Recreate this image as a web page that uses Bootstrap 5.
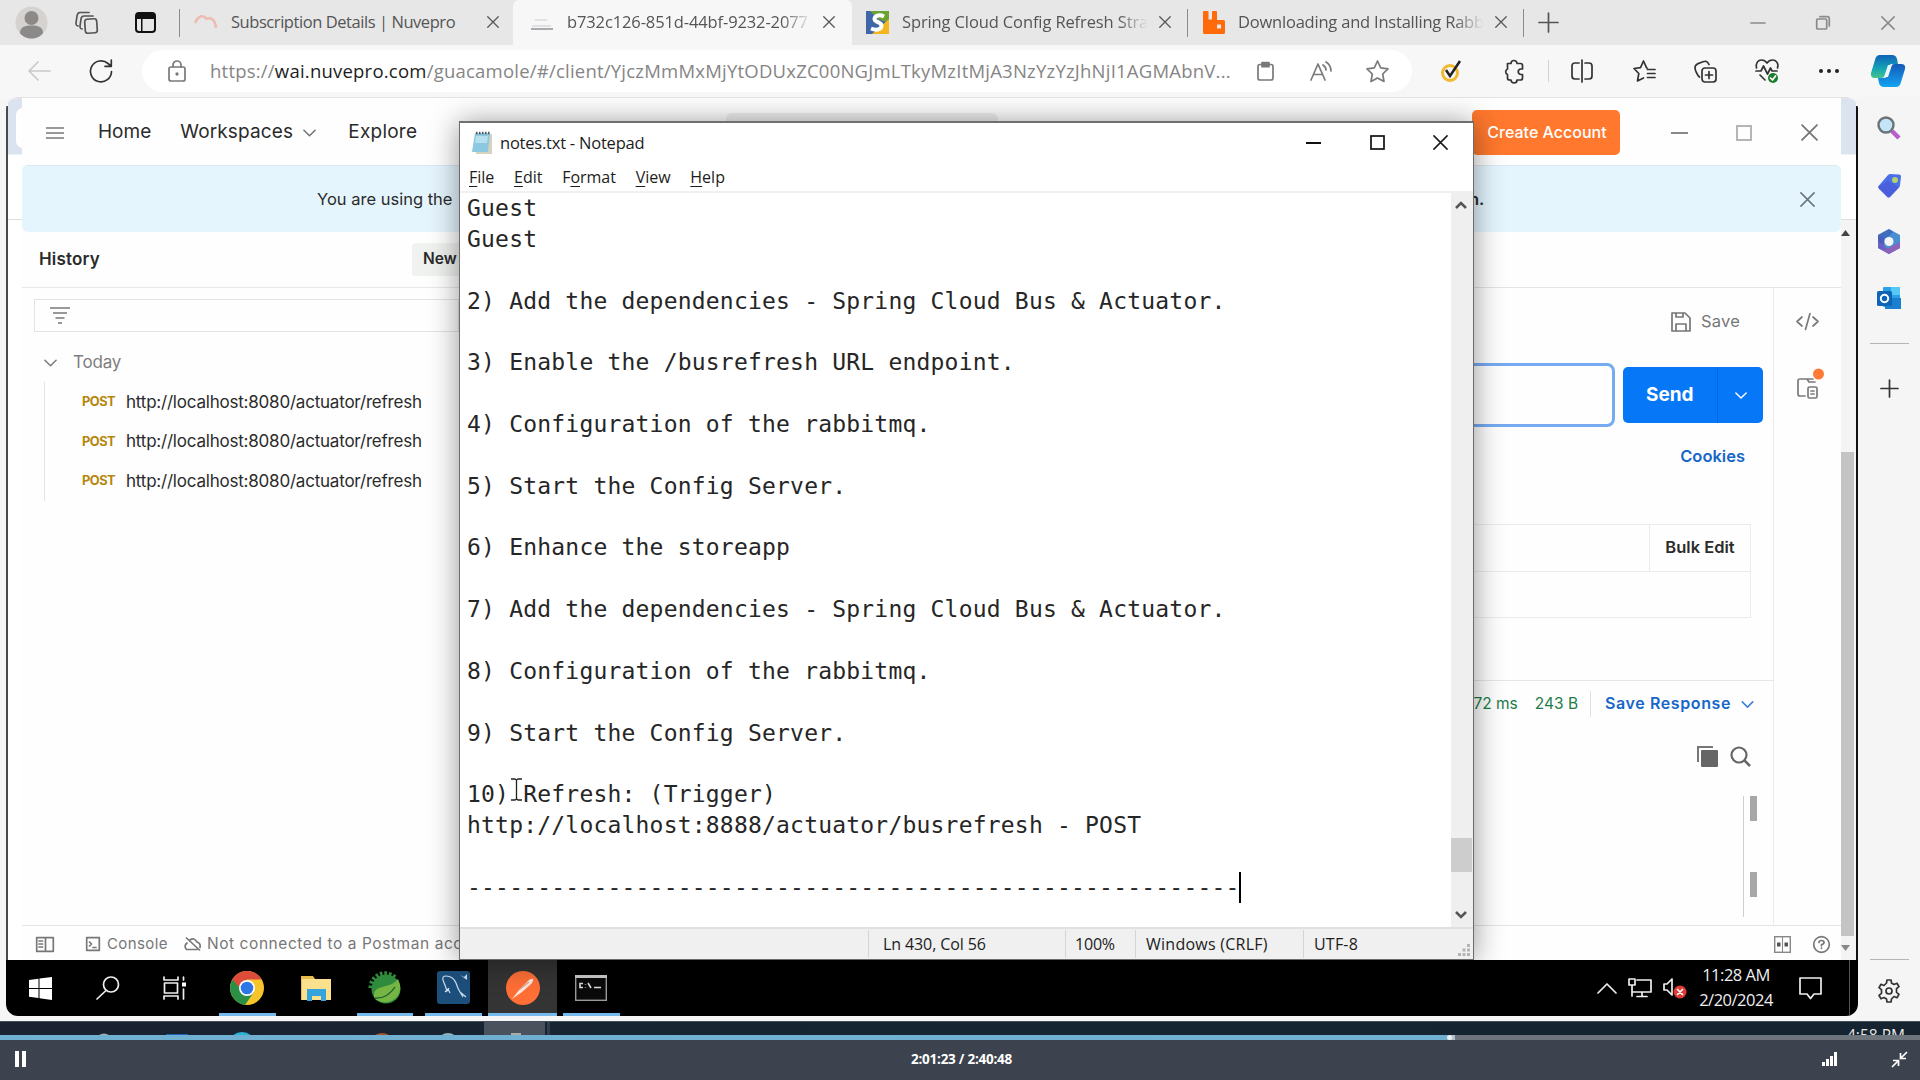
<!DOCTYPE html>
<html lang="en">
<head>
<meta charset="utf-8">
<meta name="viewport" content="width=device-width, initial-scale=1">
<title>Remote session player</title>
<link href="https://cdn.jsdelivr.net/npm/bootstrap@5.3.0/dist/css/bootstrap.min.css" rel="stylesheet">
<script src="https://cdn.jsdelivr.net/npm/bootstrap@5.3.0/dist/js/bootstrap.bundle.min.js"></script>
<style>
  html, body { height: 100%; }
  body { width: 1920px; height: 1080px; overflow: hidden; background: #f6f6f6; color: #222;
         font-family: "Open Sans", "Noto Sans", sans-serif; font-size: 16.5px; line-height: 1.2; }
  svg { display: block; flex: none; overflow: visible; }
  .ln { fill: none; stroke: currentColor; stroke-width: 1.7; stroke-linecap: round; stroke-linejoin: round; }
  .slot { display: flex; align-items: center; justify-content: center; flex: none; }
  .w24 { width: 24px; } .w40 { width: 40px; } .w48 { width: 48px; } .w50 { width: 50px; } .w56 { width: 56px; }
  .w60 { width: 60px; } .w62 { width: 62px; } .w65 { width: 65px; } .w67 { width: 67px; } .w74 { width: 74px; } .w78 { width: 78px; }
  .txt { white-space: nowrap; display: inline-block; }

  /* browser chrome */
  .tabstrip { height: 45px; background: #e7e7e7; color: #555; flex: none; }
  .vline { width: 1px; background: #8d8d8d; height: 28px; flex: none; }
  .btab { height: 45px; padding: 0 8px 1px 14px; flex: none; }
  .btab.on { background: #f7f7f7; padding: 0 11px 1px 17px; border-radius: 6px 6px 0 0; }
  .btab-1 { width: 333px; letter-spacing: -.44px; } .btab-2 { width: 339px; letter-spacing: -.12px; }
  .btab-3 { width: 335px; padding-right: 10px; letter-spacing: -.12px; } .btab-4 { width: 335px; padding-right: 10px; letter-spacing: -.21px; }
  .btab .cap { margin-left: 13px; overflow: hidden; white-space: nowrap; flex: 1; }
  .fade-r { -webkit-mask-image: linear-gradient(90deg,#000 86%,transparent 98%); mask-image: linear-gradient(90deg,#000 86%,transparent 98%); }
  .winctl { color: #8a8a8a; }
  .toolbar { height: 52px; background: #f7f7f7; padding-left: 8px; flex: none; color: #333; }
  .back { color: #c9c9c9; }
  .tb-sep { width: 1px; height: 22px; background: #d2d2d2; margin-left: 10px; }
  .addr { width: 1270px; height: 42px; border-radius: 21px; background: #fff; margin-left: 10px; padding: 0 7px 0 15px; flex: none; color: #7a7a7a; }
  .url { font-size: 18.5px; letter-spacing: .22px; margin-left: 13px; flex: 1; white-space: nowrap; color: #858585; }
  .url b { font-weight: 400; color: #1c1c1c; }

  /* remote desktop */
  .stage { height: 924px; flex: none; }
  .remote { width: 1852px; height: 919px; margin-left: 6px; padding: 0 2px; flex: none; background: #fff;
            border-top: 1px solid #e2e2e2; border-radius: 12px; overflow: hidden; position: relative; }
  .remote::after { content: ""; position: absolute; inset: 8px 0 56px 0; border-left: 2px solid #4a4a4a; border-right: 2px solid #111; pointer-events: none; }
  .desk { height: 862px; background: #fff; }
  .gutter-l { width: 14px; flex: none; } .gutter-r { width: 15px; flex: none; background: #f4f4f4; }
  .sky { height: 57px; background: #dbe3ef; overflow: hidden; }
  .sky > div { width: 7px; height: 40px; margin: 10px 0 0 8px; background: #fff; border-radius: 7px 0 0 7px; }
  .below { height: 65px; background: #fff; border-bottom: 1px solid #dedede; box-shadow: 0 -1px 0 #eef2f8; }
  .thumb { width: 13px; height: 484px; background: #c4c4c4; margin-top: 216px; }
  .arr-u { margin-top: 10px; } .arr-d { margin-top: 9px; }

  .pm { flex: 1; font-family: Inter, "Open Sans", sans-serif; color: #2b2b2b; background: #fefefe; min-width: 0; }
  .pm-head { height: 67px; font-size: 19px; padding: 2px 0 0 24px; flex: none; }
  .t-home { margin-left: 34px; } .t-ws { margin-left: 29px; letter-spacing: .15px; } .t-exp { margin-left: 32px; letter-spacing: .24px; }
  .chev-ws { margin-left: 10px; color: #777; }
  .searchbox { width: 272px; height: 40px; border-radius: 6px; background: #efefef; margin-left: 309px; }
  .btn-acct { width: 148px; height: 45px; background: #ff782d; color: #fff; border: 0; border-radius: 5px; font-size: 16px; font-weight: 500; padding: 0 0 0 2px; margin-right: 31px; }
  .close-pm { margin-right: 4px; color: #777; }
  .banner { height: 67px; background: #e5f5fe; border-top: 1px solid #d9e9f0; border-radius: 6px; font-size: 16.5px; flex: none; padding: 1px 26px 0 295px; }
  .ban-end { width: 331px; font-weight: 600; }
  .side { width: 437px; flex: none; }
  .side-head { height: 56px; border-bottom: 1px solid #e8e8e8; padding-left: 17px; }
  .side-head .ttl { font-weight: 600; font-size: 17px; letter-spacing: .19px; }
  .new-btn { width: 60px; height: 33px; background: #f0f2f0; border-radius: 4px; font-weight: 600; font-size: 15.5px; padding-left: 11px; margin-right: -13px; }
  .filter { height: 33px; border: 1px solid #e4e4e4; margin: 11px 0 1px 12px; padding-left: 15px; color: #8b8b8b; }
  .today { height: 41px; margin-top: 9px; padding: 2px 0 0 22px; font-size: 17px; letter-spacing: -.2px; color: #7e7e7e; }
  .today svg { margin-right: 16px; }
  .reqs { border-left: 1px solid #e4e4e4; margin-left: 22px; }
  .req { height: 39.5px; padding-left: 37px; }
  .verb { width: 44px; font-size: 12.8px; font-weight: 700; letter-spacing: -.5px; color: #b5860b; flex: none; }
  .req .u { font-size: 17px; letter-spacing: -.21px; }
  .pane { width: 1382px; flex: none; }
  .pane-tabs { height: 56px; border-bottom: 1px solid #e4e4e4; }
  .work { width: 1315px; border-right: 1px solid #ebebeb; }
  .rail { width: 67px; color: #7a7a7a; padding-right: 1px; }
  .ic-code { margin-top: 25px; } .ic-doc { margin: 39px 0 0 5px; }
  .actions { height: 68px; color: #767676; font-size: 16.5px; letter-spacing: .2px; padding-right: 33px; }
  .actions svg { margin-right: 10px; }
  .sendrow { margin-top: 7px; padding-right: 10px; }
  .uin { height: 64px; border: 3px solid #76abf1; border-radius: 8px; width: 300px; }
  .send { width: 140px; height: 56px; background: #0677f6; color: #fff; border-radius: 5px; margin-left: 8px; overflow: hidden; }
  .send .l { width: 95px; border-right: 1px solid #0465dc; font-weight: 700; font-size: 19px; padding-left: 23px; }
  .cook { font-size: 16.5px; font-weight: 600; color: #1767c9; height: 59px; padding-right: 28px; }
  .grid-t { border: 1px solid #ebebeb; width: 437px; margin: 38px 22px 0 0; }
  .grid-t > div { height: 46px; }
  .grid-t > div + div { border-top: 1px solid #ebebeb; }
  .bulk { width: 101px; border-left: 1px solid #ebebeb; font-weight: 600; font-size: 16.5px; }
  .resp { height: 47px; border-top: 1px solid #e6e6e6; margin-top: 62px; font-size: 15.5px; color: #1d7c48; padding-right: 17px; }
  .resp .t-ms { margin-right: 17px; }
  .resp .sep { width: 1px; height: 26px; background: #e0e0e0; margin: 0 14px 0 12px; }
  .resp svg { margin: 0 2px 0 10px; color: #3c7fd0; }
  .link-b { color: #1767c9; font-weight: 600; font-size: 16px; letter-spacing: .6px; }
  .rtools { height: 59px; padding-right: 22px; gap: 12px; }
  .mini { width: 30px; height: 121px; border-left: 1px solid #cfcfcf; }
  .mini i { display: block; width: 7px; height: 25px; background: #a7a7a7; margin-left: 6px; }
  .mini i + i { margin-top: 51px; }
  .pm-foot { height: 35px; border-top: 1px solid #e4e4e4; flex: none; color: #777; font-size: 15px; padding: 2px 11px 0 14px; }
  .ic-con { margin-left: 32px; } .ic-cloud { margin-left: 16px; } .ic-help { margin-left: 22px; }
  .t-con { margin-left: 7px; letter-spacing: .4px; } .t-not { margin-left: 6px; font-size: 15.5px; letter-spacing: .57px; }

  /* notepad */
  .np { position: absolute; left: 453px; top: 23px; width: 1015px; height: 839px; background: #fff; border: 1px solid #6c6c6c; border-top: 2px solid #6f6f6f;
        box-shadow: 0 2px 28px rgba(0,0,0,.42); color: #1c1c1c; }
  .np-title { height: 41px; padding: 0 0 2px 11px; }
  .np-title .txt { margin-left: 7px; letter-spacing: -.22px; }
  .np-menu { height: 29px; padding: 1px 0 0 9px; gap: 19.7px; font-size: 16px; border-bottom: 2px solid #f0f0f0; }
  .np-menu u { text-underline-offset: 3px; }
  .np-body { height: 734px; }
  .np-text { margin: 0; padding: 0 0 0 7px; font: 23px/30.86px "DejaVu Sans Mono", "Liberation Mono", monospace; letter-spacing: .2px; color: #262626; overflow: hidden; flex: 1; }
  .caret { display: inline-block; width: 2px; height: 31px; background: #000; vertical-align: -8px; margin-left: -1px; }
  .np-scroll { width: 22px; background: #efefef; padding-right: 2px; }
  .np-scroll path { fill: none; stroke: #555; stroke-width: 2.5; }
  .np-scroll .up { margin-top: 8px; transform: scaleY(-1); } .np-scroll .down { margin: 39px 0 8px; }
  .np-thumb { width: 21px; height: 34px; background: #cdcdcd; }
  .np-status { height: 32px; background: #f0f0f0; border-top: 2px solid #e0e0e0; font-size: 16px; }
  .np-status > div { border-left: 1px solid #d5d5d5; height: 28px; padding: 5px 0 0 10px; }
  .np-status .s1 { width: 197px; margin-left: 408px; padding-left: 14px; letter-spacing: -.1px; } .np-status .s2 { width: 70px; letter-spacing: -.2px; padding-left: 9px; }
  .np-status .s3 { width: 168px; letter-spacing: .25px; } .np-status .s4 { letter-spacing: .2px; }
  .np-status svg { margin: 0 3px 3px 0; }
  .ibeam { position: absolute; left: 505px; top: 680px; }

  /* remote taskbar */
  .rtask { height: 56px; background: #000; color: #eee; margin: 0 -2px; padding: 0 2px 0 1px; }
  .app { width: 68.8px; height: 56px; display: flex; align-items: center; justify-content: center; border-bottom: 1px solid transparent; flex: none; position: relative; }
  .app.first { margin-left: 5px; }
  .app.run::after { content: ""; position: absolute; left: 6px; right: 6px; bottom: -1px; height: 3px; background: #76b9ed; }
  .app.on { background: #343434; } .app.on::after { left: 0; right: 0; }
  .systray { gap: 11px; }
  .clock { font-size: 16.5px; letter-spacing: -.5px; line-height: 25px; width: 98px; text-align: center; padding-bottom: 2px; margin-left: -11px; }
  .ic-act { margin-right: 16px; margin-left: 3px; }
  .peek { width: 1px; height: 56px; background: #555; margin-right: 6px; }

  .rsb { width: 62px; flex: none; color: #333; background: #f5f5f5; padding-top: 19px; }
  .hr2 { width: 39px; height: 1px; background: #b5b5b5; }
  .i2 { margin-top: 33px; } .i3 { margin-top: 31px; } .i4 { margin-top: 32px; } .i5 { margin-top: 33px; } .i6 { margin-top: 36px; } .i7 { margin-top: 562px; } .i8 { margin-top: 19px; }

  /* player */
  .strip { height: 14px; background: linear-gradient(90deg,#1b2231,#152532 50%,#162431); flex: none; overflow: hidden; color: #e6e6e6; border-top: 1px solid #45525d; position: relative; }
  .tray { position: absolute; left: 1847px; top: 4px; font-size: 15.5px; }
  .prog { height: 5px; background: #6d747c; flex: none; }
  .prog .p1 { width: 1449px; background: #6eafd2; } .prog .p2 { width: 6px; background: #b3c1ca; }
  .knob { position: absolute; left: 1447px; top: 1035px; width: 5px; height: 5px; border-radius: 50%; background: #e9eef1; }
  .player { height: 40px; background: #3c424e; color: #fff; padding: 0 13px 2px 15px; }
  .ptime { font-size: 13.5px; font-weight: 700; letter-spacing: -.25px; padding-left: 75px; }
  .player .acts { gap: 54px; }
</style>
</head>
<body class="d-flex flex-column">
<svg width="0" height="0" class="position-absolute">
  <symbol id="x" viewBox="0 0 16 16"><path class="ln" d="M1 1l14 14M15 1L1 15"/></symbol>
  <symbol id="dn" viewBox="0 0 14 8"><path class="ln" d="M1 1l6 6 6-6"/></symbol>
</svg>

<div class="tabstrip d-flex align-items-center">
  <div class="slot w62"><svg width="33" height="33" viewBox="0 0 33 33"><circle cx="16.500" cy="16.500" r="16" fill="#d5d2cf"/><circle cx="16.500" cy="12" r="7" fill="#8b8a89"/><path d="M5 27c0-6 5-7.500 11.500-7.500S28 21 28 27c-3 4-7 5.500-11.500 5.500S8 31 5 27z" fill="#8b8a89"/></svg></div>
  <div class="slot w50"><svg width="24" height="24" viewBox="0 0 24 24" class="ln"><rect x="10" y="8" width="12" height="14" rx="2.500" transform="rotate(-4 16 15)"/><path d="M7 18c-2-.5-2-1-2-3l1-7c.3-2 1-3 3-3l9 0"/><path d="M3 15c-2-.5-2-1-2-3L2 5c.3-2 1-3.500 3-3.500L14 1.500"/></svg></div>
  <div class="slot w67"><svg width="21" height="21" viewBox="0 0 21 21"><rect x="1" y="1" width="19" height="19" rx="3" fill="none" stroke="#111" stroke-width="2"/><path d="M1 2h19v5H1zM6 6h1.500v14H6z" fill="#111"/></svg></div>
  <div class="vline"></div>
  <div class="btab btab-1 d-flex align-items-center">
    <svg width="24" height="24" viewBox="0 0 24 24" fill="none" stroke="#eebbb0" stroke-width="2.500"><path d="M1 13C4 6 9 4 13 9M11 9c6-2 10 0 11 9"/></svg>
    <div class="cap"><span class="txt">Subscription Details | Nuvepro</span></div>
    <div class="slot w24"><svg width="12" height="12"><use href="#x"/></svg></div>
  </div>
  <div class="btab on btab-2 d-flex align-items-center">
    <svg width="24" height="24" viewBox="0 0 24 24"><path d="M1 19h22" stroke="#aaa" stroke-width="2"/><path d="M2 16h19M5 10h12" stroke="#e0e0e6" stroke-width="2"/></svg>
    <div class="cap fade-r"><span class="txt">b732c126-851d-44bf-9232-2077</span></div>
    <div class="slot w24"><svg width="12" height="12"><use href="#x"/></svg></div>
  </div>
  <div class="btab btab-3 d-flex align-items-center">
    <svg width="23" height="23" viewBox="0 0 23 23"><rect width="23" height="23" fill="#3f67a8"/><path d="M4 0h19v12L12 8z" fill="#6ea234"/><path d="M23 8v15H6z" fill="#f3b61f"/><path d="M18 5.500C14 3.500 9 4 8.500 8c0 3.500 7.500 3 7 7s-6 4.500-10.500 2.500" fill="none" stroke="#fff" stroke-width="4"/></svg>
    <div class="cap fade-r"><span class="txt">Spring Cloud Config Refresh Strat</span></div>
    <div class="slot w24"><svg width="12" height="12"><use href="#x"/></svg></div>
  </div>
  <div class="vline"></div>
  <div class="btab btab-4 d-flex align-items-center">
    <svg width="23" height="23" viewBox="0 0 23 23"><path d="M2 0h3.500q1 0 1 1v7.500H10V1q0-1 1-1h3q1 0 1 1v8h6.500q1.500 0 1.500 1.500v11q0 1.500-1.500 1.500h-19Q1 23 1 21.500V1q0-1 1-1zM15 13.500v4h4v-4z" fill="#ff6a0a"/></svg>
    <div class="cap fade-r"><span class="txt">Downloading and Installing Rabbi</span></div>
    <div class="slot w24"><svg width="12" height="12"><use href="#x"/></svg></div>
  </div>
  <div class="vline"></div>
  <div class="slot w48"><svg width="19" height="19" viewBox="0 0 19 19" class="ln"><path d="M9.500 0v19M0 9.500h19"/></svg></div>
  <div class="d-flex ms-auto winctl">
    <div class="slot w65"><svg width="14" height="2" viewBox="0 0 14 2" class="ln"><path d="M0 1h14"/></svg></div>
    <div class="slot w65"><svg width="14" height="14" viewBox="0 0 14 14" class="ln"><rect x=".7" y="3" width="10" height="10" rx="1"/><path d="M4 .7h7.500Q13.300.7 13.300 3v7"/></svg></div>
    <div class="slot w65"><svg width="14" height="14"><use href="#x"/></svg></div>
  </div>
</div>

<div class="toolbar d-flex align-items-center">
  <div class="slot w62 back"><svg width="22" height="20" viewBox="0 0 22 20" class="ln"><path d="M22 10H1M10 1L1 10l9 9"/></svg></div>
  <div class="slot w62"><svg width="24" height="24" viewBox="0 0 24 24" class="ln"><path d="M22.500 12.500A10.500 10.500 0 1 1 19 4.500L22 7M22.300 1v6.300h-6.300"/></svg></div>
  <div class="addr d-flex align-items-center">
    <div class="slot w40"><svg width="18" height="22" viewBox="0 0 18 22" class="ln"><rect x="1" y="7" width="16" height="14" rx="2"/><path d="M5 7V5a4 4 0 0 1 8 0v2"/><circle cx="9" cy="14" r=".8"/></svg></div>
    <div class="url"><span class="txt">https://<b>wai.nuvepro.com</b>/guacamole/#/client/YjczMmMxMjYtODUxZC00NGJmLTkyMzItMjA3NzYzYzJhNjI1AGMAbnV...</span></div>
    <div class="slot w56"><svg width="17" height="19" viewBox="0 0 17 19" class="ln"><rect x="1" y="2.500" width="15" height="15.500" rx="2"/><rect x="5" y=".7" width="7" height="4" fill="#777"/></svg></div>
    <div class="slot w56"><svg width="22" height="20" viewBox="0 0 22 20" class="ln"><path d="M1 19L8 3l7 16M3.500 13.500h9M13 4q3 2 3 5M16 1q5 3 5 9"/></svg></div>
    <div class="slot w56"><svg width="23" height="23" viewBox="0 0 23 23" class="ln"><path d="M11.500 1l3.200 6.800 7.300 1-5.300 5.200 1.300 7.500-6.500-3.600L5 21.500 6.300 14 1 8.800l7.300-1z"/></svg></div>
  </div>
  <div class="slot w78"><svg width="20" height="22" viewBox="0 0 20 22" fill="none"><circle cx="9" cy="13" r="7.500" stroke="#f0b92e" stroke-width="3"/><path d="M5 10l4 6L19 1" stroke="#222" stroke-width="2.500"/></svg></div>
  <div class="slot w48"><svg width="22" height="23" viewBox="0 0 22 23" class="ln"><path d="M4.500 3.500H8a3 3 0 0 1 6 0h3.500q2 0 2 2V9h-1.500a2.600 2.600 0 0 0 0 5.500h1.500V18q0 2-2 2H14a3 3 0 0 1-6 0H6.500q-2 0-2-2v-3.500a3 3 0 0 1 0-5.500z"/></svg></div>
  <div class="tb-sep"></div>
  <div class="slot w65"><svg width="22" height="22" viewBox="0 0 22 22" class="ln"><path d="M8 3H4Q1 3 1 6v10q0 3 3 3h4M14 3h4q3 0 3 3v10q0 3-3 3h-4M11 0v22"/></svg></div>
  <div class="slot w60"><svg width="23" height="22" viewBox="0 0 23 22" class="ln"><path d="M14 8l-.5-.3L10.500 1l-3 6.700L1 8.500l4.800 5L4.500 21l6-3M14.500 9.500H22M14.500 13.500H22M14.500 17.500H22"/></svg></div>
  <div class="slot w62"><svg width="23" height="23" viewBox="0 0 23 23" class="ln"><rect x="8" y="8" width="14" height="14" rx="3"/><path d="M15 11.500v7M11.500 15h7M5.500 17C3 15 1 10 1 7.500 1 4 4 3.500 7 2.500s6-3 8 2"/></svg></div>
  <div class="slot w62"><svg width="24" height="24" viewBox="0 0 24 24" class="ln"><path d="M1.500 9C.5 4 3 1 6.500 1 10 1 12 4 12 4s2-3 5.500-3C21 1 24 4 22.500 9M1 12h5l2.500-5 4 8 3-6 1.500 3H22M5 16l5 5"/><circle cx="18" cy="19" r="5" fill="#1d7f2e" stroke="none"/><path d="M15.500 19l2 2 3-4" stroke="#fff"/></svg></div>
  <div class="slot w62"><svg width="20" height="4" viewBox="0 0 20 4" fill="#222"><circle cx="2" cy="2" r="2"/><circle cx="10" cy="2" r="2"/><circle cx="18" cy="2" r="2"/></svg></div>
  <div class="slot w56"><svg width="34" height="32" viewBox="0 0 34 32"><defs><linearGradient id="ga" x1="0" y1="0" x2="0" y2="1"><stop offset="0" stop-color="#0f63b8"/><stop offset=".6" stop-color="#16a5b5"/><stop offset="1" stop-color="#45c58b"/></linearGradient><linearGradient id="gb" x1="0" y1="0" x2="0" y2="1"><stop offset="0" stop-color="#1659b5"/><stop offset="1" stop-color="#12a4f4"/></linearGradient></defs><path d="M9 0h12q4 0 5 4l1 5h-6q-3 0-4 4l-2 6q-1 4-5 4H4q-5 0-4-5L4 5q1-5 5-5z" fill="url(#ga)"/><path d="M25 32H13q-4 0-5-4l-1-5h6q3 0 4-4l2-6q1-4 5-4h6q5 0 4 5l-4 13q-1 5-5 5z" fill="url(#gb)"/><path d="M17 10h4l-4 12h-4z" fill="#eaf7ff"/></svg></div>
</div>

<div class="stage d-flex">
  <div class="remote">
    <div class="desk d-flex">
      <div class="gutter-l"><div class="sky"><div></div></div><div class="below"></div></div>
      <div class="pm d-flex flex-column">
        <div class="pm-head d-flex align-items-center">
          <svg width="18" height="12" viewBox="0 0 18 12" stroke="#999" stroke-width="1.800"><path d="M0 1h18M0 6h18M0 11h18"/></svg>
          <span class="txt t-home">Home</span>
          <span class="txt t-ws">Workspaces</span>
          <svg width="13" height="8" class="chev-ws"><use href="#dn"/></svg>
          <span class="txt t-exp">Explore</span>
          <div class="searchbox"></div>
          <button class="btn-acct ms-auto"><span class="txt">Create Account</span></button>
          <div class="slot w56"><svg width="17" height="2" viewBox="0 0 17 2"><path d="M0 1h17" stroke="#888" stroke-width="2"/></svg></div>
          <div class="slot w74"><svg width="16" height="16" viewBox="0 0 16 16"><rect x="1" y="1" width="14" height="14" fill="none" stroke="#b5b5b5" stroke-width="2"/></svg></div>
          <div class="slot w56 close-pm"><svg width="17" height="17"><use href="#x"/></svg></div>
        </div>
        <div class="banner d-flex align-items-center">
          <span class="txt">You are using the</span>
          <span class="ban-end ms-auto">n.</span>
          <svg width="15" height="15" class="text-secondary"><use href="#x"/></svg>
        </div>
        <div class="d-flex flex-grow-1">
          <div class="side">
            <div class="side-head d-flex align-items-center justify-content-between"><span class="txt ttl">History</span><div class="new-btn d-flex align-items-center"><span class="txt">New</span></div></div>
            <div class="filter d-flex align-items-center"><svg width="20" height="17" viewBox="0 0 20 17"><path d="M0 1h20M3 6h14M5.500 11h9M8 16h4" stroke="#999" stroke-width="1.800"/></svg></div>
            <div class="today d-flex align-items-center"><svg width="13" height="8"><use href="#dn"/></svg><span class="txt">Today</span></div>
            <div class="reqs">
              <div class="req d-flex align-items-center"><span class="verb">POST</span><span class="txt u">http://localhost:8080/actuator/refresh</span></div>
              <div class="req d-flex align-items-center"><span class="verb">POST</span><span class="txt u">http://localhost:8080/actuator/refresh</span></div>
              <div class="req d-flex align-items-center"><span class="verb">POST</span><span class="txt u">http://localhost:8080/actuator/refresh</span></div>
            </div>
          </div>
          <div class="pane d-flex flex-column">
            <div class="pane-tabs"></div>
            <div class="d-flex flex-grow-1">
              <div class="work d-flex flex-column align-items-end">
                <div class="actions d-flex align-items-center"><svg width="20" height="20" viewBox="0 0 20 20" class="ln"><path d="M1 1h13l5 5v13H1zM5 1v4h7V1M5 19v-7h10v7"/></svg><span class="txt">Save</span></div>
                <div class="sendrow d-flex align-items-center">
                  <div class="uin"></div>
                  <div class="send d-flex"><div class="l d-flex align-items-center"><span class="txt">Send</span></div><div class="slot flex-grow-1"><svg width="12" height="7"><use href="#dn"/></svg></div></div>
                </div>
                <div class="cook d-flex align-items-center"><span class="txt">Cookies</span></div>
                <div class="grid-t">
                  <div class="d-flex justify-content-end"><div class="bulk slot"><span class="txt">Bulk Edit</span></div></div>
                  <div></div>
                </div>
                <div class="resp w-100 d-flex align-items-center justify-content-end">
                  <span class="txt t-ms">72 ms</span><span class="txt">243 B</span>
                  <div class="sep"></div>
                  <span class="txt link-b">Save Response</span><svg width="13" height="7"><use href="#dn"/></svg>
                </div>
                <div class="rtools d-flex align-items-center">
                  <svg width="21" height="21" viewBox="0 0 21 21"><path d="M1 16V1h15" fill="none" stroke="#777" stroke-width="2"/><rect x="4" y="4" width="17" height="17" rx="1" fill="#666"/></svg>
                  <svg width="21" height="21" viewBox="0 0 21 21"><circle cx="9" cy="9" r="7.500" fill="none" stroke="#666" stroke-width="2.200"/><path d="M14 14l6 6" stroke="#666" stroke-width="2.500"/></svg>
                </div>
                <div class="mini mt-auto mb-2"><i></i><i></i></div>
              </div>
              <div class="rail d-flex flex-column align-items-center">
                <svg width="23" height="17" viewBox="0 0 23 17" class="ln ic-code"><path d="M6 4L1 8.500 6 13M17 4l5 4.500-5 4.500M14 .5L9.500 16.500"/></svg>
                <svg width="26" height="30" viewBox="0 0 26 30" class="ln ic-doc"><path d="M8 27H3q-2 0-2-2V12q0-2 2-2h13M10 10l2 3h6"/><rect x="11" y="18" width="9" height="11" rx="1.500"/><path d="M14 22h3M14 25h3"/><circle cx="21.500" cy="5" r="5.500" fill="#ff7a36" stroke="none"/></svg>
              </div>
            </div>
          </div>
        </div>
        <div class="pm-foot d-flex align-items-center">
          <svg width="18" height="15" viewBox="0 0 18 15" class="ln"><rect x=".7" y=".7" width="16.600" height="13.600"/><path d="M9.500 1v13M3 4h3.500M3 7h3.500M3 10h3.500"/></svg>
          <svg width="14" height="14" viewBox="0 0 14 14" class="ln ic-con"><rect x=".7" y=".7" width="12.600" height="12.600"/><path d="M3.500 5l2 2-2 2M7 10.500h3"/></svg>
          <span class="txt t-con">Console</span>
          <svg width="17" height="14" viewBox="0 0 17 14" class="ln ic-cloud"><path d="M3 6Q-.5 9 2.500 12.500H13M6 3q4-3 7 2 4 1.500 3 5.500M2.500 1l13 12"/></svg>
          <span class="txt t-not">Not connected to a Postman acc</span>
          <svg class="ms-auto" width="17" height="17" viewBox="0 0 17 17"><rect x=".7" y=".7" width="15.600" height="15.600" fill="none" stroke="#888" stroke-width="1.400"/><path d="M8.500 1v15" stroke="#888"/><path d="M3 6.500h3.500v4H3zM10.500 6.500H14v4h-3.500z" fill="#555"/></svg>
          <svg width="17" height="17" viewBox="0 0 17 17" class="ln ic-help"><circle cx="8.500" cy="8.500" r="7.800"/><path d="M6 6.500Q6 4.500 8.500 4.500T11 6.500Q11 8 8.500 8.500v1.300M8.500 12v.3"/></svg>
        </div>
      </div>
      <div class="gutter-r d-flex flex-column">
        <div class="sky"></div><div class="below"></div>
        <svg width="9" height="6" viewBox="0 0 9 6" class="arr-u"><path d="M0 6l4.500-6L9 6z" fill="#444"/></svg>
        <div class="thumb"></div>
        <svg width="9" height="6" viewBox="0 0 9 6" class="arr-d"><path d="M0 0l4.500 6L9 0z" fill="#888"/></svg>
      </div>
    </div>

    <div class="rtask d-flex align-items-center">
      <div class="slot w67"><svg width="23" height="23" viewBox="0 0 23 23" fill="#fff"><path d="M0 3l9.500-1.300V11H0zM10.500 1.500L23 0v11H10.500zM0 12h9.500v9L0 19.700zM10.500 12H23v11l-12.500-1.700z"/></svg></div>
      <div class="slot w67"><svg width="24" height="24" viewBox="0 0 24 24" class="ln"><circle cx="15" cy="8.500" r="7.500"/><path d="M10 14.500L1 23"/></svg></div>
      <div class="slot w67"><svg width="24" height="22" viewBox="0 0 24 22" class="ln"><path d="M1 0v3h14V0M1 22v-3h14v3M1.500 6h13v10h-13zM20.500 0v3M20.500 12v10"/><path d="M19 5.500h4v4h-4z" fill="#fff" stroke="none"/></svg></div>
      <div class="app run first"><svg width="34" height="34" viewBox="0 0 34 34"><circle cx="17" cy="17" r="17" fill="#f6c52c"/><path d="M17 17L2.300 8.500A17 17 0 0 0 15 33.900L24 21z" fill="#2b8f45"/><path d="M2.300 8.500A17 17 0 0 1 31.700 8.500H17L10 17z" fill="#dd4b3b"/><circle cx="17" cy="17" r="8" fill="#fff"/><circle cx="17" cy="17" r="6.300" fill="#2c76e6"/></svg></div>
      <div class="app"><svg width="30" height="26" viewBox="0 0 30 26"><path d="M0 1h12l2 3h16v21H0z" fill="#e9bd4c"/><path d="M1 4h29v21H1z" fill="#fbe08d"/><path d="M6 26V14h19v12h-5v-5h-9v5z" fill="#35a4da"/></svg></div>
      <div class="app run"><svg width="34" height="34" viewBox="0 0 34 34"><path d="M3 17a14 14 0 0 1 24-10" fill="none" stroke="#2f8b3c" stroke-width="5" stroke-dasharray="2.500 1.800"/><circle cx="18" cy="18" r="14.500" fill="#2f8b3c"/><path d="M6 26C5 12 22 19 30 8q5 10-1 18-9 9-21 3z" fill="#74b544"/><path d="M7 27q12 1 20-11" fill="none" stroke="#1d5c2a" stroke-width="1.300"/></svg></div>
      <div class="app run"><svg width="33" height="33" viewBox="0 0 33 33"><rect width="33" height="33" rx="3" fill="#1d4f7c"/><path d="M9 20q1 1 3-3M10 20Q8 14 6 9q-1-4 3-4 7 0 10 7 2 6 4 9l6 5M23 21l3 5M8 21l3-3 2 4" fill="none" stroke="#c8dff0" stroke-width="1.200"/><path d="M23 4l4 2 3-3v6z" fill="#c8dff0"/></svg></div>
      <div class="app run on"><svg width="34" height="34" viewBox="0 0 34 34"><circle cx="17" cy="17" r="17" fill="#ff6f36"/><path d="M6 28l7-9 8-8q4-4 6-3 1 2-3 6l-8 7z" fill="#ffe9df"/><path d="M13 19l10-8" stroke="#e6a48a" stroke-width="1.500"/></svg></div>
      <div class="app run"><svg width="32" height="26" viewBox="0 0 32 26"><rect x=".7" y=".7" width="30.600" height="24.600" fill="#0a0a0a" stroke="#9a9a9a" stroke-width="1.400"/><path d="M0 1.500h32" stroke="#ccc" stroke-width="3"/><path d="M8 8.500H5v4h3M10.500 9v.5M10.500 12v.5M13 8l3 5M19 12.500h7" stroke="#ddd" stroke-width="1.600" fill="none"/></svg></div>
      <div class="ms-auto d-flex align-items-center systray">
        <svg width="20" height="11" viewBox="0 0 20 11" class="ln"><path d="M1 10l9-9 9 9"/></svg>
        <svg width="24" height="20" viewBox="0 0 24 20" class="ln"><path d="M9 2h14v12H5M14 14v4M9 18.500h10M1 1h6v6H1zM4 7v11"/></svg>
        <svg width="24" height="22" viewBox="0 0 24 22" class="ln"><path d="M9 2v16l-5-5H1V7h3z"/><circle cx="17" cy="15" r="6.500" fill="#df3a35" stroke="none"/><path d="M14.500 12.500l5 5M19.500 12.500l-5 5" stroke="#fff"/></svg>
        <div class="clock"><span class="txt">11:28 AM</span><br><span class="txt">2/20/2024</span></div>
        <svg width="23" height="23" viewBox="0 0 23 23" class="ln ic-act"><path d="M1 1h21v16h-7l-3.500 4.500L8 17H1z"/></svg>
        <div class="peek"></div>
      </div>
    </div>

    <div class="np d-flex flex-column">
      <div class="np-title d-flex align-items-center">
        <svg width="22" height="24" viewBox="0 0 22 24"><path d="M6 3h15v20H5z" fill="#d7d2bd"/><path d="M4 2h15l-2 19H1z" fill="#8cc8df"/><path d="M5 5h12l-1 7H4z" fill="#b6e0ee"/><path d="M5 2h14" stroke="#555" stroke-width="2.500" stroke-dasharray="1.500 1.500"/></svg>
        <span class="txt">notes.txt - Notepad</span>
        <div class="d-flex ms-auto">
          <div class="slot w65"><svg width="15" height="2"><path d="M0 1h15" stroke="#111" stroke-width="2"/></svg></div>
          <div class="slot w62"><svg width="15" height="15"><rect x="1" y="1" width="13" height="13" fill="none" stroke="#111" stroke-width="1.700"/></svg></div>
          <div class="slot w65"><svg width="15" height="15"><use href="#x"/></svg></div>
        </div>
      </div>
      <div class="np-menu d-flex align-items-center">
        <span class="txt"><u>F</u>ile</span><span class="txt"><u>E</u>dit</span><span class="txt">F<u>o</u>rmat</span><span class="txt"><u>V</u>iew</span><span class="txt"><u>H</u>elp</span>
      </div>
      <div class="np-body d-flex">
<pre class="np-text">Guest
Guest

2) Add the dependencies - Spring Cloud Bus &amp; Actuator.

3) Enable the /busrefresh URL endpoint.

4) Configuration of the rabbitmq.

5) Start the Config Server.

6) Enhance the storeapp

7) Add the dependencies - Spring Cloud Bus &amp; Actuator.

8) Configuration of the rabbitmq.

9) Start the Config Server.

10) Refresh: (Trigger)
http://localhost:8888/actuator/busrefresh - POST

-------------------------------------------------------<span class="caret"></span></pre>
        <div class="np-scroll d-flex flex-column align-items-center">
          <svg width="12" height="8" class="up"><path d="M1 1l5 5 5-5"/></svg>
          <div class="np-thumb mt-auto"></div>
          <svg width="12" height="8" class="down"><path d="M1 1l5 5 5-5"/></svg>
        </div>
      </div>
      <div class="np-status d-flex align-items-center">
        <div class="s1"><span class="txt">Ln 430, Col 56</span></div>
        <div class="s2"><span class="txt">100%</span></div>
        <div class="s3"><span class="txt">Windows (CRLF)</span></div>
        <div class="s4"><span class="txt">UTF-8</span></div>
        <svg class="ms-auto align-self-end" width="12" height="12" viewBox="0 0 12 12" fill="#b5b5b5"><path d="M9 0h3v3H9zM9 4.500h3v3H9zM9 9h3v3H9zM4.500 4.500h3v3h-3zM4.500 9h3v3h-3zM0 9h3v3H0z"/></svg>
      </div>
    </div>
    <svg class="ibeam" width="11" height="23" viewBox="0 0 11 23"><path d="M0 1h4l1.500 1L7 1h4M0 22h4l1.500-1L7 22h4M5.500 2v19" fill="none" stroke="#222" stroke-width="1.300"/></svg>
  </div>

  <div class="rsb d-flex flex-column align-items-center">
    <svg width="24" height="24" viewBox="0 0 24 24"><path d="M15 15l7 7" stroke="#b45fcb" stroke-width="4.500"/><circle cx="9" cy="9" r="7.500" fill="#c4e5f8" stroke="#6b7278" stroke-width="2.400"/></svg>
    <svg class="i2" width="25" height="25" viewBox="0 0 25 25"><path d="M11 2q1-1 2.500-1L22 1.500q2 0 2 2L23 12q0 1.500-1 2.500L13 24q-1.500 1-3-.5L2 16q-1.500-1.500-.5-3z" fill="#4a6fe8"/><path d="M1 14l9 10q1.500 1 3 0l9-9.500L11 8z" fill="#4d53d4" opacity=".6"/><circle cx="18" cy="7" r="3" fill="#b4d26a"/></svg>
    <svg class="i3" width="24" height="25" viewBox="0 0 24 25"><path d="M12 0l11 6v13l-11 6L1 19V6z" fill="#4a8fd2"/><path d="M1 6l6 3v8l5 4v4L1 19z" fill="#6a5fc4"/><path d="M23 13v6l-11 6-6-3.500 11-5z" fill="#8d62b8"/><path d="M12 0l4 3-4 4-5 3-1 6-5-4V6z" fill="#3a5eb4" opacity=".7"/><circle cx="12" cy="12.500" r="4.500" fill="#f5f5f5"/></svg>
    <svg class="i4" width="24" height="24" viewBox="0 0 24 24"><rect x="6" y="1" width="17" height="20" rx="1" fill="#2aa1e6"/><path d="M14 1h9v8h-9z" fill="#55c8f5"/><path d="M8 12l16 0v11H8z" fill="#1b7fd0"/><rect x="0" y="5" width="15" height="15" rx="1.500" fill="#0e64b6"/><circle cx="7.500" cy="12.500" r="3.700" fill="none" stroke="#fff" stroke-width="2"/></svg>
    <div class="hr2 i5"></div>
    <svg width="17" height="17" viewBox="0 0 17 17" class="ln i6"><path d="M8.500 0v17M0 8.500h17"/></svg>
    <div class="hr2 i7"></div>
    <svg width="24" height="24" viewBox="0 0 24 24" class="ln i8"><circle cx="12" cy="12" r="3"/><path d="M9.500 4L10 1h4l.5 3 2.500 1.500 3-1.200 2 3.400-2.500 2v3.600l2.500 2-2 3.400-3-1.200L14.500 20 14 23h-4l-.5-3L7 18.500l-3 1.200-2-3.400 2.500-2v-3.600L2 8.700l2-3.400 3 1.200z"/></svg>
  </div>
</div>

<div class="strip d-flex">
  <svg width="1920" height="13" viewBox="0 0 1920 13"><rect x="484" width="61" height="13" fill="#49525d"/><path d="M547 0h3v13h-3z" fill="#333d49"/><circle cx="104" cy="20" r="8.500" fill="#a5aab0"/><rect x="166" y="12" width="22" height="2" fill="#1c63b8"/><circle cx="242" cy="24" r="14" fill="#2bb3d6"/><circle cx="382" cy="24" r="13" fill="#a7532f"/><circle cx="448" cy="22" r="11" fill="#8fb2c0"/><rect x="511" y="11" width="10" height="2" fill="#aaa"/></svg>
  <span class="txt tray">4:58 PM</span>
</div>
<div class="prog d-flex"><div class="p1"></div><div class="p2"></div></div><div class="knob"></div>
<div class="player d-flex align-items-center justify-content-between">
  <svg width="11" height="16" viewBox="0 0 11 16" fill="#fff"><path d="M0 0h4v16H0zM7 0h4v16H7z"/></svg>
  <span class="txt ptime mx-auto">2:01:23 / 2:40:48</span>
  <div class="d-flex align-items-center acts">
    <svg width="16" height="14" viewBox="0 0 16 14" fill="#fff"><path d="M0 10h3v4H0zM4 7h3v7H4zM8 4h3v10H8zM12 0h3v14h-3z"/></svg>
    <svg width="15" height="15" viewBox="0 0 15 15" fill="none" stroke="#fff" stroke-width="1.700"><path d="M15 0L9 6M8.500 1v5.500H14M0 15l6-6M1 8.500h5.500V14"/></svg>
  </div>
</div>
</body>
</html>
